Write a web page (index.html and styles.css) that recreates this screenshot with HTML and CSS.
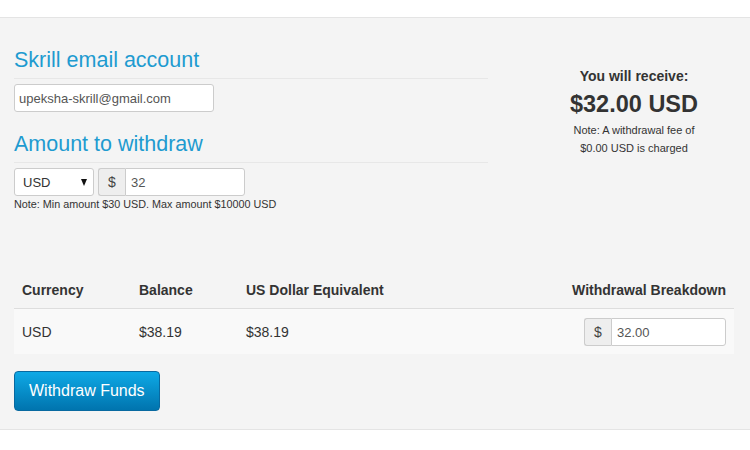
FILE: index.html
```html
<!DOCTYPE html>
<html lang="en">
<head>
<meta charset="utf-8">
<title>Withdraw</title>
<link rel="stylesheet" href="styles.css">
</head>
<body>
<div class="panel">
  <div class="top">
    <div class="form">
      <h3 class="section-title">Skrill email account</h3>
      <input class="field email" type="text" value="upeksha-skrill@gmail.com">
      <h3 class="section-title second">Amount to withdraw</h3>
      <div class="amount-row">
        <div class="select"><span>USD</span><span class="caret"></span></div>
        <div class="group">
          <span class="addon">$</span>
          <input class="field amount" type="text" value="32">
        </div>
      </div>
      <p class="note">Note: Min amount $30 USD. Max amount $10000 USD</p>
    </div>
    <div class="receive">
      <p class="receive-label">You will receive:</p>
      <p class="receive-value">$32.00 USD</p>
      <p class="receive-note">Note: A withdrawal fee of<br>$0.00 USD is charged</p>
    </div>
  </div>
  <table class="balances">
    <thead>
      <tr>
        <th class="c1">Currency</th>
        <th class="c2">Balance</th>
        <th class="c3">US Dollar Equivalent</th>
        <th class="c4">Withdrawal Breakdown</th>
      </tr>
    </thead>
    <tbody>
      <tr>
        <td>USD</td>
        <td>$38.19</td>
        <td>$38.19</td>
        <td class="c4">
          <div class="group small">
            <span class="addon">$</span>
            <input class="field breakdown" type="text" value="32.00">
          </div>
        </td>
      </tr>
    </tbody>
  </table>
  <button class="btn" type="button">Withdraw Funds</button>
</div>
</body>
</html>
```

FILE: styles.css
```css
body {
  margin: 0;
  background: #fff;
  color: #333;
  font-family: "Liberation Sans", Arial, sans-serif;
}

.panel {
  margin-top: 17px;
  background: #f4f4f4;
  border-top: 1px solid #e4e4e4;
  border-bottom: 1px solid #e4e4e4;
  padding: 29px 16px 18px 14px;
}

.top {
  display: grid;
  grid-template-columns: 474px 1fr;
  column-gap: 46px;
}

.section-title {
  margin: 0 0 5px;
  padding-bottom: 5px;
  border-bottom: 1px solid #e7e7e7;
  font-size: 21.5px;
  line-height: 26px;
  font-weight: normal;
  color: #1e9bd0;
}

.section-title.second {
  margin-top: 19px;
}

.field {
  display: block;
  box-sizing: border-box;
  height: 28px;
  margin: 0;
  padding: 0 4px;
  border: 1px solid #ccc;
  border-radius: 3px;
  background: #fff;
  color: #555;
  font-family: "Liberation Sans", Arial, sans-serif;
  font-size: 13px;
  outline: none;
}

.email {
  width: 200px;
}

.amount-row {
  display: flex;
  gap: 4px;
}

.select {
  box-sizing: border-box;
  width: 80px;
  height: 28px;
  display: flex;
  align-items: center;
  justify-content: space-between;
  padding: 0 6px 0 8px;
  border: 1px solid #ccc;
  border-radius: 3px;
  background: #fff;
  font-size: 13px;
  color: #333;
}

.caret {
  width: 0;
  height: 0;
  border-left: 3.5px solid transparent;
  border-right: 3.5px solid transparent;
  border-top: 7px solid #111;
}

.group {
  display: flex;
}

.addon {
  box-sizing: border-box;
  width: 27px;
  height: 28px;
  display: flex;
  align-items: center;
  justify-content: center;
  background: #eee;
  border: 1px solid #ccc;
  border-right: none;
  border-radius: 3px 0 0 3px;
  font-size: 14px;
  color: #444;
}

.group .field {
  border-radius: 0 3px 3px 0;
}

.amount {
  width: 120px;
  padding-left: 5px;
}

.note {
  margin: 1px 0 0;
  font-size: 10.8px;
  line-height: 14px;
  color: #333;
}

.receive {
  padding-top: 19px;
  text-align: center;
}

.receive p {
  margin: 0;
}

.receive-label {
  font-size: 14px;
  line-height: 20px;
  font-weight: bold;
}

.receive .receive-value {
  margin-top: 3px;
  font-size: 23.5px;
  line-height: 30px;
  font-weight: bold;
}

.receive .receive-note {
  margin-top: 2px;
  font-size: 11px;
  line-height: 18px;
}

.balances {
  width: 100%;
  margin-top: 61px;
  border-collapse: collapse;
  font-size: 14px;
}

.balances th {
  padding: 8px;
  line-height: 20px;
  text-align: left;
  font-weight: bold;
  border-bottom: 1px solid #ddd;
}

.balances td {
  padding: 8px;
  line-height: 28px;
  background: #f9f9f9;
  vertical-align: middle;
}

.balances .c1 { width: 101px; }
.balances .c2 { width: 91px; }
.balances .c4 { text-align: right; }

.group.small {
  display: inline-flex;
  vertical-align: middle;
}

.breakdown {
  width: 115px;
  padding-left: 5px;
}

.btn {
  display: block;
  margin-top: 17px;
  height: 40px;
  padding: 0 14px;
  border: 1px solid #0869a0;
  border-radius: 4px;
  background: linear-gradient(#0ea9e6, #0074ae);
  color: #fff;
  font-family: "Liberation Sans", Arial, sans-serif;
  font-size: 16px;
}
```
